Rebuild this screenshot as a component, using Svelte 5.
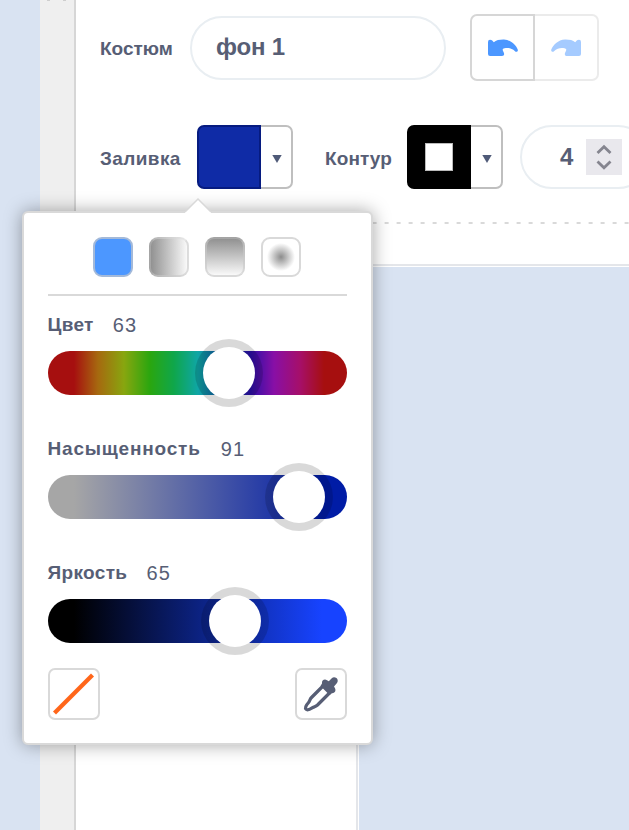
<script>
  const sliders = [
    {
      label: 'Цвет',
      value: 63,
      gap: 19,
      labelSpacing: 0.3,
      knob: 181,
      stops: '#a60f0f 26px, #a6690f 50px, #88a60f 76px, #2aa60f 102px, #0fa64b 126px, #0fa6a6 150px, #0f4ba6 176px, #2a0fa6 202px, #880fa6 226px, #a60f69 252px, #a60f0f 276px'
    },
    {
      label: 'Насыщенность',
      value: 91,
      gap: 20,
      labelSpacing: 0.8,
      knob: 251,
      stops: '#a6a6a6 26px, #001ca6 274px'
    },
    {
      label: 'Яркость',
      value: 65,
      gap: 19,
      labelSpacing: 0.35,
      knob: 187,
      stops: '#000000 26px, #1743ff 274px'
    }
  ];
  const arrow =
    'M2 3Q2 .7 4 .7Q5.5 .7 6.2 1.6L7.8 3.2C10 1.2 14 .5 18 .6C25 1 30 6 31.8 10.8C32.3 12.6 30 13.5 29 12.3C26 9 22 8.6 18.5 9.2C16.5 9.6 16.2 10.6 17.3 12.4C18.8 14.9 18.3 17 16 17H4Q2 17 2 15Z';
</script>

{#snippet swatch(kind)}
  <div class="swatch {kind}">
    <div class="paint">{#if kind === 'outline'}<i></i>{/if}</div>
    <div class="drop"><svg width="10" height="8" viewBox="0 0 10 8"><path d="M.3 0H9.7L5 8Z" fill="#4f5a78" /></svg></div>
  </div>
{/snippet}

<div class="app">
  <div class="side"></div>
  <div class="rail">
    <svg width="20" height="2" viewBox="0 0 20 2"><path d="M0 0H3M16 0H19" stroke="#c4c4c4" stroke-width="1.6" /></svg>
  </div>
  <main>
    <div class="row first">
      <span class="label costume">Костюм</span>
      <div class="field name"><span>фон 1</span></div>
      <div class="history">
        <div class="undo"><svg width="33" height="18" viewBox="0 0 33 18"><path d={arrow} fill="#4c97ff" /></svg></div>
        <div class="redo"><svg width="33" height="18" viewBox="0 0 33 18"><path d={arrow} fill="#a5cbff" transform="translate(33 0) scale(-1 1)" /></svg></div>
      </div>
    </div>
    <div class="row second">
      <span class="label fill-label">Заливка</span>
      {@render swatch('fill')}
      <span class="label outline-label">Контур</span>
      {@render swatch('outline')}
      <div class="field width">
        <span>4</span>
        <div class="spin">
          <svg width="36" height="36" viewBox="0 0 36 36" fill="none" stroke="#85858f" stroke-width="2.8"><path d="M11.5 14L18 7.7L24.5 14M11.5 22.5L18 28.8L24.5 22.5" /></svg>
        </div>
      </div>
    </div>
    <svg class="divider" width="553" height="2"><path d="M0 1H553" stroke="#d9d9d9" stroke-width="2" stroke-dasharray="4 8" stroke-dashoffset="-8.6" /></svg>
    <div class="stage"><div class="canvas"></div></div>
  </main>

  <div class="popover">
    <svg class="tip" width="28" height="16" viewBox="0 0 28 16"><path d="M1 16V15L14 2L27 15V16Z" fill="#fff" /><path d="M1 15L14 2L27 15" fill="none" stroke="#d9d9d9" stroke-width="1.5" /></svg>
    <div class="modes">
      <i class="solid"></i><i class="horizontal"></i><i class="vertical"></i><i class="radial"></i>
    </div>
    {#each sliders as s}
      <div class="slider">
        <div class="caption" style="gap: {s.gap}px"><b style="letter-spacing: {s.labelSpacing}px">{s.label}</b><span>{s.value}</span></div>
        <div class="track" style="background: linear-gradient(90deg, {s.stops})">
          <div class="knob" style="left: {s.knob}px"></div>
        </div>
      </div>
    {/each}
    <div class="tools">
      <div class="tool"><svg width="48" height="48" viewBox="0 0 48 48"><path d="M4.5 43L42.5 5" stroke="#ff661a" stroke-width="4.2" /></svg></div>
      <div class="tool">
        <svg width="48" height="48" viewBox="0 0 48 48">
          <path d="M27 15L14.5 27.5C12.8 29.2 13 31 11.4 32.8C9 35.4 7.6 38 9.2 39.4C10.8 40.8 13.5 39 15.6 37.6C17.3 36.5 18.8 36.6 20.5 35L33 22.5" fill="#fff" stroke="#575e75" stroke-width="3.2" stroke-linejoin="round" />
          <path d="M25 13.5C24.5 10.5 27.5 8.5 30 10.3L31.8 11.3L34.5 8.4C38 5.4 42.6 9.4 40 13L37 16.6L38 18.3C39.3 21 37.5 23.4 35 23.2L32.5 25L23.5 16Z" fill="#575e75" />
        </svg>
      </div>
    </div>
  </div>
</div>

<style>
  :global(body) { margin: 0; }
  .app, .app * { box-sizing: border-box; }
  .app {
    position: relative;
    display: flex;
    width: 629px;
    height: 830px;
    overflow: hidden;
    background: #fff;
    color: #575e75;
    font-family: "Liberation Sans", Arial, sans-serif;
  }
  svg { display: block; flex: none; }
  .side { width: 40px; background: #d9e3f2; }
  .rail { width: 36px; padding-left: 7px; background: #efefef; border-right: 2px solid #d6d6d6; }
  main { width: 553px; display: flex; flex-direction: column; }
  .row { display: flex; align-items: center; padding-left: 24px; flex: none; }
  .first { height: 67px; margin-top: 14px; }
  .second { height: 64px; margin-top: 44px; }
  .label { font-weight: 700; font-size: 19px; line-height: 22px; white-space: nowrap; flex: none; }
  .costume { width: 90px; padding-top: 2px; }
  .fill-label { width: 97px; padding-top: 4px; letter-spacing: .4px; }
  .outline-label { width: 82px; margin-left: 32px; padding-top: 4px; letter-spacing: .1px; }
  .field {
    height: 64px;
    border: 2px solid #e9eef2;
    border-radius: 32px;
    display: flex;
    align-items: center;
    font-weight: 700;
    font-size: 24px;
    flex: none;
  }
  .name { width: 256px; padding-left: 24px; letter-spacing: -.2px; }
  .name span { margin-top: -2px; }
  .width { width: 130px; margin-left: 17px; padding-left: 38px; }
  .width .spin { margin-left: 13px; }
  .spin { width: 36px; height: 36px; background: #e9e8ed; }
  .history { display: flex; margin-left: 24px; }
  .undo, .redo { height: 67px; display: flex; align-items: center; justify-content: center; border: 2px solid #d6d6d6; }
  .undo { width: 65px; border-radius: 7px 0 0 7px; }
  .redo { width: 64px; border-color: #ebebeb; border-left: 0; border-radius: 0 7px 7px 0; }
  .swatch { display: flex; width: 96px; height: 64px; flex: none; }
  .paint { width: 64px; border: 2px solid #061b80; border-radius: 7px 0 0 7px; background: #0f2ba6; display: flex; align-items: center; justify-content: center; }
  .outline .paint { background: #000; border-color: #000; }
  .paint i { width: 28px; height: 28px; background: #fff; border: 1px solid #bbb; }
  .drop { width: 32px; border: 2px solid #bfbfbf; border-left: 0; border-radius: 0 7px 7px 0; display: flex; align-items: center; justify-content: center; padding: 3px 0 0 1px; }
  .divider { margin-top: 33px; }
  .stage { flex: 1; margin-top: 40px; border-top: 2px solid #e4e6ea; padding: 1px 0 0 280px; }
  .canvas { height: 100%; border-left: 2px solid #e4e6ea; background: linear-gradient(90deg, #fff 1px, #d9e3f2 1px); }
  .popover {
    position: absolute;
    left: 22px;
    top: 211px;
    width: 351px;
    height: 534px;
    padding: 24px 24px 24px 23.5px;
    border: 2px solid #d9d9d9;
    border-radius: 6px;
    background: #fff;
    box-shadow: 0 0 18px rgba(0, 0, 0, .35);
  }
  .tip { position: absolute; left: 160px; top: -16px; }
  .modes { height: 59px; display: flex; justify-content: center; gap: 16px; border-bottom: 2px solid #d9d9d9; }
  .modes i { width: 40px; height: 40px; border: 2px solid #d9d9d9; border-radius: 9px; background-origin: border-box; }
  .modes .solid { background: #4c97ff; border-color: #a3b9d9; }
  .modes .horizontal { background-image: linear-gradient(90deg, #8c8c8c, #fff); border-color: rgba(217, 217, 217, .45) rgba(200, 200, 200, .6) rgba(200, 200, 200, .6) rgba(217, 217, 217, .3); }
  .modes .vertical { background-image: linear-gradient(#8c8c8c, #fff); border-color: rgba(217, 217, 217, .3) rgba(200, 200, 200, .6) #d9d9d9; }
  .modes .radial { background: radial-gradient(circle, #8c8c8c, #fff 14px); }
  .slider { height: 124px; padding-top: 20px; }
  .modes + .slider { height: 122px; padding-top: 18px; }
  .caption { height: 22px; display: flex; align-items: center; font-size: 19px; line-height: 22px; }
  .caption span { font-size: 20px; letter-spacing: 1.2px; margin-top: -1px; }
  .track { position: relative; height: 44px; margin-top: 15px; border-radius: 22px; }
  .knob { position: absolute; top: -4px; width: 52px; height: 52px; margin-left: -26px; border-radius: 50%; background: #fff; box-shadow: 0 0 0 8px rgba(0, 0, 0, .15); }
  .tools { display: flex; justify-content: space-between; margin-top: 2px; }
  .tool { width: 52px; height: 52px; border: 2px solid #d9d9d9; border-radius: 7px; }
</style>
